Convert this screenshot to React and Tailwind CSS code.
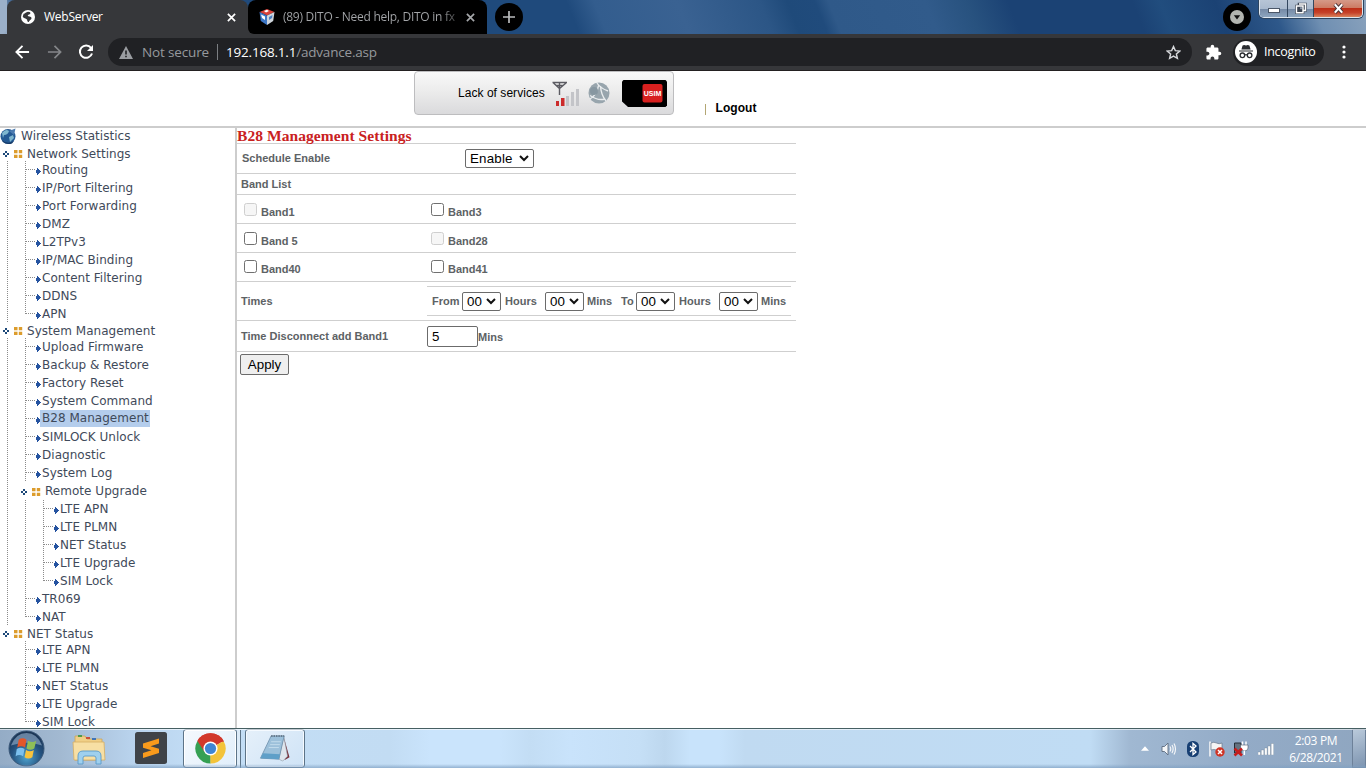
import clsx from 'clsx';

const TREE = [
  { label: 'Network Settings', children: ['Routing', 'IP/Port Filtering', 'Port Forwarding', 'DMZ', 'L2TPv3', 'IP/MAC Binding', 'Content Filtering', 'DDNS', 'APN'] },
  {
    label: 'System Management',
    children: [
      'Upload Firmware',
      'Backup & Restore',
      'Factory Reset',
      'System Command',
      'B28 Management',
      'SIMLOCK Unlock',
      'Diagnostic',
      'System Log',
      { label: 'Remote Upgrade', children: ['LTE APN', 'LTE PLMN', 'NET Status', 'LTE Upgrade', 'SIM Lock'] },
      'TR069',
      'NAT',
    ],
  },
  { label: 'NET Status', children: ['LTE APN', 'LTE PLMN', 'NET Status', 'LTE Upgrade', 'SIM Lock'] },
];

const ACTIVE = 'B28 Management';

/* ---------- browser chrome ---------- */

function CloseX({ className }) {
  return (
    <svg viewBox="0 0 10 10" className={clsx('w-[9px] h-[9px] shrink-0', className)} stroke="currentColor" strokeWidth="1.9" fill="none">
      <path d="M1 1 L9 9 M9 1 L1 9" />
    </svg>
  );
}

function TabStrip() {
  return (
    <div className="h-[34px] flex shrink-0 bg-[linear-gradient(68deg,#9db1c8_0,#8fa5c0_9px,#1f4a7c_30px,#1f4a7c_42%,#335d8e_44%,#3a6292_50%,#2c5686_56%,#1f4a7a_58%,#204b7c_60%,#2f5989_61%,#315b8b_68%,#28527f_71%,#1b4274_74%,#1b4274_83%,#214d7e_85%,#1b4274_89%,#2e588a_93%,#6f8fb2_96%,#8ba3bd_100%)]">
      <div className="w-[7px] shrink-0 bg-[#9bb0c9] rounded-br-[6px]" />
      <div className="w-[241px] shrink-0 bg-[#36373a] rounded-t-[8px] flex items-center pl-[14px] pr-[12px] text-white">
        <svg viewBox="0 0 16 16" className="w-[14px] h-[14px] shrink-0">
          <circle cx="8" cy="8" r="8" fill="#fff" />
          <path d="M3 4.4 C5 4.2 5.4 2.4 8 2 C10.500 2 11 3 10.600 4.400 C10 5.600 8 5 7.600 6.600 C8.500 8 11.500 6.800 12 9 C12.200 11 9.600 11 9 13.600 C7.600 14 7 12.400 7 11 C6 9.500 2.400 9.600 2 7.400 Z" fill="#36373a" />
        </svg>
        <span className="ml-[9px] text-[12px] leading-[16px] tracking-[-0.250px] flex-1 whitespace-nowrap">WebServer</span>
        <CloseX />
      </div>
      <div className="shrink-0 bg-[linear-gradient(transparent_12px,#36373a_20px)]">
        <div className="w-[239px] h-[34px] bg-black rounded-t-[8px] rounded-bl-[6px] flex items-center pl-[12px] pr-[12px] text-[#a5a7aa]">
          <svg viewBox="0 0 16 16" className="w-[16px] h-[16px] shrink-0 -ml-px">
            <path d="M8 0 L15.500 3 L8 6.500 L0.500 3 Z" fill="#d8413a" />
            <path d="M0.500 3 L8 6.500 V16 L1.800 12 Z" fill="#3c76c5" />
            <path d="M15.500 3 L8 6.500 V16 L14.200 12 Z" fill="#cfd5dc" />
            <path d="M5 2 L8 0.800 L10 2 L7 3.400 Z M2 5.500 L6 7.500 V11 L3 9 Z" fill="#fff" />
            <path d="M10 8 L13.500 6 L13 9 L10 11 Z" fill="#4a7fc4" />
          </svg>
          <span className="ml-[8px] text-[12px] leading-[16px] tracking-[-0.270px] whitespace-nowrap bg-[linear-gradient(90deg,#a5a7aa_0,#a5a7aa_158px,#1b1b1b_178px)] bg-clip-text text-transparent">
            (89) DITO - Need help, DITO in fx
          </span>
          <span className="flex-1" />
          <CloseX />
        </div>
      </div>
      <div className="ml-[8px] mt-[3px] w-[28px] h-[28px] rounded-full bg-black flex items-center justify-center">
        <svg viewBox="0 0 12 12" className="w-[12px] h-[12px]" stroke="#b9bbbd" strokeWidth="1.7">
          <path d="M6 0 V12 M0 6 H12" />
        </svg>
      </div>
      <div className="flex-1" />
      <div className="mt-[3px] w-[28px] h-[28px] rounded-full bg-black flex items-center justify-center">
        <svg viewBox="0 0 14 14" className="w-[14px] h-[14px]">
          <circle cx="7" cy="7" r="7" fill="#b3b5b0" />
          <path d="M3.800 5.200 H10.200 L7 9.600 Z" fill="#111" />
        </svg>
      </div>
      <div className="ml-[8px] mr-[3px] w-[104px] h-[18px] flex border border-t-0 border-[#dfe7ef] rounded-b-[5px] overflow-hidden shadow-[0_0_0_1px_#2d4560]">
        <div className="w-[28px] border-r border-[#33475f] bg-[linear-gradient(#b7c5d6_0,#aabace_50%,#7488a4_51%,#8da5bf_100%)] flex justify-center items-center">
          <div className="w-[12px] h-[5px] mt-[3px] bg-white border border-[#4b5768]" />
        </div>
        <div className="w-[26px] border-r border-[#33475f] bg-[linear-gradient(#b7c5d6_0,#aabace_50%,#7488a4_51%,#8da5bf_100%)] flex justify-center items-center">
          <svg viewBox="0 0 12 12" className="w-[12px] h-[12px] -mt-px" fill="none">
            <path d="M4 2 H10.500 V8.500 H4 Z M1.500 4 H8 V10.800 H1.500 Z" stroke="#3d4654" strokeWidth="2.600" />
            <path d="M4 2 H10.500 V8.500 H8.500 M1.500 4 H8 V10.800 H1.500 Z" stroke="#fff" strokeWidth="1.400" />
          </svg>
        </div>
        <div className="flex-1 bg-[linear-gradient(#d59a88_0,#cc7a62_48%,#bd2f17_50%,#c6422a_75%,#d9835c_100%)] flex justify-center items-center">
          <svg viewBox="0 0 14 12" className="w-[13px] h-[11px] -mt-px">
            <path d="M3 1.500 L11 10.500 M11 1.500 L3 10.500" stroke="#4b3538" strokeWidth="4.200" />
            <path d="M3 1.500 L11 10.500 M11 1.500 L3 10.500" stroke="#fff" strokeWidth="2.400" />
          </svg>
        </div>
      </div>
    </div>
  );
}

function Toolbar() {
  return (
    <div className="h-[37px] shrink-0 bg-[#36373a] border-b border-[#232021] flex items-center pl-[15px] text-white">
      <svg viewBox="0 0 16 16" className="w-[15px] h-[16px]" fill="none" stroke="#fff" strokeWidth="2">
        <path d="M15 8 H2 M8 1.500 L1.500 8 L8 14.500" />
      </svg>
      <svg viewBox="0 0 16 16" className="ml-[17px] w-[15px] h-[16px]" fill="none" stroke="#85878a" strokeWidth="1.800">
        <path d="M1 8 H14 M8 1.500 L14.500 8 L8 14.500" />
      </svg>
      <svg viewBox="0 0 16 16" className="ml-[16px] w-[16px] h-[16px]">
        <path d="M13 3.800 A6.200 6.200 0 1 0 14 9.500" fill="none" stroke="#fff" strokeWidth="2" />
        <path d="M15 1 V7 H9 Z" fill="#fff" />
      </svg>
      <div className="ml-[14px] w-[1084px] h-[28px] rounded-full bg-[#202124] flex items-center pl-[11px] pr-[11px] text-[14px]">
        <svg viewBox="0 0 14 13" className="w-[14px] h-[13px]">
          <path d="M7 0 L14 13 H0 Z" fill="#9a9da1" />
          <path d="M6.200 4.500 H7.800 V8.600 H6.200 Z M6.200 9.700 H7.800 V11.300 H6.200 Z" fill="#202124" />
        </svg>
        <span className="ml-[9px] w-[75px] text-[#96999d] text-[13.500px] tracking-[-0.14px] whitespace-nowrap">Not secure</span>
        <span className="w-px h-[16px] bg-[#7b7e82]" />
        <span className="ml-[8px] flex-1 text-[13.500px] tracking-[-0.2px] whitespace-nowrap text-[#96999d]">
          <span className="text-white">192.168.1.1</span>/advance.asp
        </span>
        <svg viewBox="0 0 24 24" className="w-[15px] h-[15px]" fill="none" stroke="#d7d9dc" strokeWidth="2.300">
          <path d="M12 2.500 L14.900 9 L22 9.700 L16.600 14.400 L18.200 21.400 L12 17.700 L5.800 21.400 L7.400 14.400 L2 9.700 L9.100 9 Z" />
        </svg>
      </div>
      <svg viewBox="0 0 24 24" className="ml-[13px] w-[17px] h-[17px]" fill="#fff">
        <path d="M20.500 11H19V7c0-1.100-.9-2-2-2h-4V3.500a2.500 2.500 0 0 0-5 0V5H4c-1.100 0-1.990.9-1.990 2v3.800H3.500c1.490 0 2.700 1.210 2.700 2.700s-1.210 2.700-2.700 2.700H2V20c0 1.100.9 2 2 2h3.800v-1.500c0-1.490 1.210-2.700 2.700-2.700s2.700 1.210 2.700 2.700V22H17c1.100 0 2-.9 2-2v-4h1.500a2.500 2.500 0 0 0 0-5z" />
      </svg>
      <div className="ml-[11px] w-[91px] h-[27px] rounded-full bg-[#202124] flex items-center pl-[2px]">
        <svg viewBox="0 0 22 22" className="w-[22px] h-[22px] shrink-0">
          <circle cx="11" cy="11" r="11" fill="#fff" />
          <path d="M7.600 4.500 L9.200 4 L11 4.500 L12.800 4 L14.400 4.500 L15.600 8.600 H6.400 Z M4 9.500 H18 V10.600 H4 Z" fill="#2b2d31" />
          <g fill="none" stroke="#2b2d31" strokeWidth="1.300">
            <circle cx="7.400" cy="14.300" r="2.300" />
            <circle cx="14.600" cy="14.300" r="2.300" />
            <path d="M9.700 14 Q11 13.200 12.300 14" />
          </g>
        </svg>
        <span className="ml-[7px] text-[12.500px] tracking-[-0.3px] whitespace-nowrap">Incognito</span>
      </div>
      <svg viewBox="0 0 4 14" className="ml-[18px] w-[4px] h-[14px]" fill="#fff">
        <circle cx="2" cy="2" r="1.600" />
        <circle cx="2" cy="7" r="1.600" />
        <circle cx="2" cy="12" r="1.600" />
      </svg>
    </div>
  );
}

/* ---------- router page ---------- */

function StatusHeader() {
  return (
    <div className="h-[57px] shrink-0 border-b-2 border-[#cdcdcd] flex items-start pl-[414px] font-['Liberation_Sans',sans-serif] text-black">
      <div className="w-[260px] h-[44px] border border-[#bdbdbf] rounded-[4px] bg-[linear-gradient(#f8f8f8_0,#ececec_45%,#dadadc_100%)] flex items-start">
        <span className="ml-[43px] mt-[13px] w-[88px] text-[12px] leading-[16px] tracking-[0.04px] whitespace-nowrap">Lack of services</span>
        <svg viewBox="0 0 28 26" className="ml-[6px] mt-[9px] w-[28px] h-[26px]">
          <path d="M0.500 1.500 H15 M1.500 2 L7.500 7.500 L14 2 M4 4.500 H11.500 M7.500 1 V14" stroke="#5b5b62" strokeWidth="1.400" fill="none" />
          <path d="M4 20 H7 V25 H4 Z M9 17 H12.500 V25 H9 Z" fill="#cc2b2b" />
          <path d="M14 15 H17 V25 H14 Z M19 11 H22 V25 H19 Z M24 8 H27 V25 H24 Z" fill="#c3c4c8" />
        </svg>
        <svg viewBox="0 0 22 22" className="ml-[8px] mt-[10px] w-[22px] h-[22px]">
          <circle cx="11" cy="11" r="10.500" fill="#98a5ad" />
          <path d="M9 1 Q12 6 20 9 M12.500 4 Q13 13 18 19 M10.500 3.500 Q9 13 2 17 M2 13.500 Q10 19 17 17" fill="none" stroke="#e9ecee" strokeWidth="1.400" />
          <circle cx="6" cy="9" r="4" fill="#8797a1" />
        </svg>
        <svg viewBox="0 0 45 27" className="ml-[12px] mt-[8px] w-[45px] h-[27px]">
          <path d="M1.500 0 H43.500 L45 1.500 V25.500 L43.500 27 H6 L0 21.500 V1.500 Z" fill="#000" />
          <rect x="20.500" y="4" width="20" height="18.500" rx="2" fill="#d8201f" />
          <text x="30.500" y="16.300" textAnchor="middle" fontSize="7" fontWeight="700" fill="#fff" fontFamily="Liberation Sans">USIM</text>
        </svg>
      </div>
      <div className="ml-[31px] mt-[28px] flex items-center text-[12px] leading-[18px]">
        <span className="w-px h-[11px] mt-[2px] bg-[#b3a673]" />
        <span className="ml-[9.500px] font-bold tracking-[0.05px]">Logout</span>
      </div>
    </div>
  );
}

function VLine() {
  return (
    <svg viewBox="0 0 18 18" className="w-[18px] h-[18px] shrink-0">
      <path d="M7.500 0 V18" stroke="#8b8b8b" strokeDasharray="1 1" />
    </svg>
  );
}

function Elbow({ last }) {
  return (
    <svg viewBox="0 0 24 18" className="w-[24px] h-[18px] shrink-0">
      <path d={last ? 'M7.500 0 V9' : 'M7.500 0 V18'} stroke="#8b8b8b" strokeDasharray="1 1" />
      <path d="M8 8.500 H18" stroke="#8b8b8b" strokeDasharray="1 1" />
      <path d="M18 9 H19 V12 H18 Z M19 7 H20 V14 H19 Z M20 8 H21 V13 H20 Z M21 9 H22 V12 H21 Z M22 10 H23 V11 H22 Z" fill="#2553a0" />
    </svg>
  );
}

function FolderIcon() {
  return (
    <svg viewBox="0 0 27 15" className="w-[27px] h-[15px] shrink-0">
      <path d="M5 5 H7 V7 H5 Z M3 7 H5 V9 H3 Z M7 7 H9 V9 H7 Z M5 9 H7 V11 H5 Z" fill="#1e4a7a" />
      <path d="M14 4 H17.500 V7.300 H14 Z M18.800 4 H22.200 V7.300 H18.800 Z M14 8.700 H17.500 V12 H14 Z M18.800 8.700 H22.200 V12 H18.800 Z" fill="#dc9c2c" />
    </svg>
  );
}

function Leaf({ label, guides, last }) {
  return (
    <div className="h-[18px] flex items-center">
      {guides.map((on, i) => (on ? <VLine key={i} /> : <span key={i} className="w-[18px] shrink-0" />))}
      <Elbow last={last} />
      <span className={clsx('leading-[17px]', label === ACTIVE && 'bg-[#b4cdec] -ml-[2px] -mt-px pl-[2px] pr-px')}>{label}</span>
    </div>
  );
}

function Branch({ node, guides, last }) {
  const inner = [...guides, !last];
  return (
    <div>
      <div className={clsx('flex items-center', guides.length ? 'h-[18px]' : 'h-[15px]')}>
        {guides.map((on, i) => (on ? <VLine key={i} /> : <span key={i} className="w-[18px] shrink-0" />))}
        <FolderIcon />
        <span className={clsx(!guides.length && 'pt-[2px]')}>{node.label}</span>
      </div>
      {node.children.map((child, i) => {
        const isLast = i === node.children.length - 1;
        return typeof child === 'string' ? (
          <Leaf key={child} label={child} guides={inner} last={isLast} />
        ) : (
          <Branch key={child.label} node={child} guides={inner} last={isLast} />
        );
      })}
    </div>
  );
}

function Sidebar() {
  return (
    <nav className="w-[237px] shrink-0 border-r-2 border-[#cdcdcd] overflow-hidden font-['DejaVu_Sans',sans-serif] text-[12px] tracking-[0.03px] leading-[15px] text-[#3f4a5a] whitespace-nowrap">
      <div className="h-[18px] flex items-center pb-[2px]">
        <svg viewBox="0 0 16 16" className="w-[16px] h-[16px] shrink-0">
          <circle cx="8" cy="8.500" r="7.500" fill="#245a94" />
          <path d="M2 5 Q6 0 9 3 Q8 7 4 7 L3 10 Z M9 9 L13 7 L14 10 L10 14 Z" fill="#7fb7cf" />
          <path d="M9 3 L15.500 0.500 L14 7 Z" fill="#4b7bb0" />
          <path d="M2 12 Q7 17 14 13 L12 15.500 Q7 17 3 14 Z" fill="#173a66" />
        </svg>
        <span className="ml-[5px]">Wireless Statistics</span>
      </div>
      {TREE.map((node, i) => (
        <Branch key={node.label} node={node} guides={[]} last={i === TREE.length - 1} />
      ))}
    </nav>
  );
}

function SelectBox({ value, className }) {
  return (
    <div className={clsx('h-[19px] shrink-0 border border-[#6b6b6b] rounded-[2px] bg-white flex items-center justify-between pl-[4px] pr-[4px] font-normal text-[13.333px] text-black', className)}>
      <span className="leading-[17px] tracking-[0.2px]">{value}</span>
      <svg viewBox="0 0 10 7" className="w-[10px] h-[7px]" fill="none" stroke="#111" strokeWidth="2">
        <path d="M1 1 L5 5 L9 1" />
      </svg>
    </div>
  );
}

function Band({ label, disabled, className }) {
  return (
    <div className={clsx('flex items-start pl-[7px]', className)}>
      <span className={clsx('w-[13px] h-[13px] border rounded-[2.500px]', disabled ? 'border-[#cfcfcf] bg-[#f6f6f6]' : 'border-[#707070] bg-white')} />
      <span className="ml-[4px] mt-[3px] leading-[13px]">{label}</span>
    </div>
  );
}

const BAND_ROWS = [
  { pad: 'pt-[8px]', bands: [['Band1', true], ['Band3', false]] },
  { pad: 'pt-[8px]', bands: [['Band 5', false], ['Band28', true]] },
  { pad: 'pt-[7px]', bands: [['Band40', false], ['Band41', false]] },
];

function Settings() {
  return (
    <main className="w-[559px] font-['Liberation_Sans',sans-serif] font-bold text-[11px] text-[#5d6265] whitespace-nowrap">
      <h1 className="h-[16px] border-b border-[#cfcfcf] font-['Liberation_Serif',serif] font-bold text-[15.500px] leading-[15px] tracking-[0.070px] text-[#c9211e]">
        B28 Management Settings
      </h1>
      <div className="h-[30px] border-b border-[#cfcfcf] flex items-center pl-[5px]">
        <span className="w-[223px]">Schedule Enable</span>
        <SelectBox value="Enable" className="w-[69px]" />
      </div>
      <div className="h-[21px] border-b border-[#cfcfcf] flex items-center pl-[4px]">Band List</div>
      {BAND_ROWS.map(({ pad, bands }) => (
        <div key={bands[0][0]} className="h-[29px] border-b border-[#cfcfcf] flex">
          {bands.map(([label, disabled]) => (
            <Band key={label} label={label} disabled={disabled} className={clsx('w-[187px]', pad)} />
          ))}
        </div>
      ))}
      <div className="h-[39px] border-b border-[#cfcfcf] flex items-center pl-[4px]">
        <span className="w-[186px]">Times</span>
        <div className="w-[364px] h-[30px] border-y border-[#cfcfcf] flex items-center pl-[5px]">
          <span className="w-[30px] pt-px">From</span>
          <SelectBox value="00" className="w-[39px]" />
          <span className="pl-[4px] w-[44px] pt-px">Hours</span>
          <SelectBox value="00" className="w-[39px]" />
          <span className="pl-[3px] w-[37px] pt-px">Mins</span>
          <span className="w-[15px] pt-px">To</span>
          <SelectBox value="00" className="w-[39px]" />
          <span className="pl-[4px] w-[44px] pt-px">Hours</span>
          <SelectBox value="00" className="w-[39px]" />
          <span className="pl-[3px] pt-px">Mins</span>
        </div>
      </div>
      <div className="h-[31px] border-b border-[#cfcfcf] flex items-center pl-[4px]">
        <span className="w-[186px]">Time Disconnect add Band1</span>
        <div className="w-[51px] h-[21px] border border-[#6b6b6b] rounded-[2px] pl-[4px] font-normal text-[13.333px] leading-[19px] text-black">5</div>
        <span className="pt-[2px]">Mins</span>
      </div>
      <button className="ml-[3px] mt-[2px] w-[49px] h-[21px] border border-[#6b6b6b] rounded-[2px] bg-[#efefef] font-normal text-[13.333px] leading-[19px] text-black">
        Apply
      </button>
    </main>
  );
}

/* ---------- windows taskbar ---------- */

function StartOrb() {
  return (
    <svg viewBox="0 0 38 38" className="w-[37px] h-[37px]">
      <defs>
        <radialGradient id="orb" cx="50%" cy="75%" r="70%">
          <stop offset="0" stopColor="#4fa3cf" />
          <stop offset="0.600" stopColor="#24527f" />
          <stop offset="1" stopColor="#1b3555" />
        </radialGradient>
      </defs>
      <circle cx="19" cy="19" r="18" fill="url(#orb)" stroke="#3c5878" />
      <path d="M3 16 Q8 3 19 3 Q30 3 35 16 Q19 10 3 16 Z" fill="#8fa9c4" opacity="0.650" />
      <path d="M11 10 Q15 7 19 10 L17.500 18 Q13.500 15.500 9.500 18 Z" fill="#e2572b" />
      <path d="M20.500 11 Q25 13.500 29 11 L27 19 Q23 21.500 19 19 Z" fill="#8fbf58" />
      <path d="M9 19.500 Q13 17 17 19.500 L15.500 27 Q11.500 24.500 7.800 27 Z" fill="#7cc0ee" />
      <path d="M18.500 20.500 Q22.500 23 26.500 20.500 L25 28 Q21 30.500 17 28 Z" fill="#f8c33c" />
    </svg>
  );
}

function Taskbar() {
  return (
    <footer className="h-[40px] shrink-0 border-t border-[#465f62] flex items-center relative text-white bg-[linear-gradient(90deg,#94acc6_0,#a2b9d1_60px,#b8d2ec_130px,#c3def6_200px,#c2dcf3_390px,#cae4fc_430px,#cae4fc_500px,#c3ddf4_530px,#c9e3fb_570px,#c5dff6_640px,#bdd7ee_665px,#c8e3fb_690px,#c8e3fb_720px,#c0daf1_745px,#c0dcf4_1090px,#a0b8d2_1130px,#93abc7_1240px,#8fa6c0_1366px)]">
      <div className="absolute inset-x-0 top-0 h-px bg-white/60" />
      <div className="absolute inset-x-0 bottom-0 h-[4px] bg-[linear-gradient(#7fa0c200,#7fa0c2bb)]" />
      <div className="ml-[8px]">
        <StartOrb />
      </div>
      <svg viewBox="0 0 34 32" className="ml-[27px] w-[34px] h-[32px] shrink-0">
        <path d="M3 3 H13 L15 6 H30 V27 H3 Z" fill="#f0cf86" stroke="#c9a35a" strokeWidth="0.800" />
        <path d="M6 2 H10 V4 H6 Z" fill="#4f9a4a" />
        <path d="M14 4 H18 V6 H14 Z" fill="#c9503a" />
        <path d="M20 5 H24 V7 H20 Z" fill="#3f74b8" />
        <path d="M1 9 H32 L33 27 H2 Z" fill="#f7dfa4" stroke="#d5ad62" strokeWidth="0.800" />
        <path d="M6 31 V23 Q6 18 11 18 H24 Q29 18 29 23 V31 H24 V25 Q24 23 22 23 H13 Q11 23 11 25 V31 Z" fill="#9fd0ee" stroke="#5a9ac8" strokeWidth="0.900" />
      </svg>
      <svg viewBox="0 0 32 32" className="ml-[29px] w-[32px] h-[32px] shrink-0 -mt-px">
        <rect width="32" height="32" rx="2.500" fill="#3f4348" />
        <path d="M8 11.600 L24 6.500 V11.500 L15.500 14.200 L24 16.800 V21 L8 26 V21 L16.500 18.300 L8 15.800 Z" fill="#f89a1c" />
      </svg>
      <div className="ml-[16px] w-[54px] h-[39px] shrink-0 border border-[#5d7488] rounded-[3px] bg-[linear-gradient(135deg,#f5f9fd,#e0eefb)] flex items-center justify-center shadow-[inset_0_0_0_1px_#fff]">
        <svg viewBox="0 0 32 32" className="w-[31px] h-[31px] -mt-px">
          <path d="M16 16 L2.500 8.200 A15.500 15.500 0 0 1 29.500 8.200 Z" fill="#d2382b" />
          <path d="M16 16 L29.500 8.200 A15.500 15.500 0 0 1 16 31.500 Z" fill="#f3c33a" />
          <path d="M16 16 L16 31.500 A15.500 15.500 0 0 1 2.500 8.200 Z" fill="#35a053" />
          <path d="M16 9 H29.900 L29.500 8.200 A15.500 15.500 0 0 0 2.500 8.200 L9.900 19.500 Z" fill="#d2382b" />
          <path d="M22.100 19.500 L16 31.500 L16 23 Z" fill="#f3c33a" />
          <circle cx="16" cy="16" r="7.300" fill="#fff" />
          <circle cx="16" cy="16" r="5.800" fill="#3f86d4" />
        </svg>
      </div>
      <div className="w-[4px] h-[38px] shrink-0 border-r border-[#5d7488] bg-[#dcebf8]" />
      <div className="ml-[4px] w-[60px] h-[39px] shrink-0 border border-[#5d7488] rounded-[3px] bg-[linear-gradient(135deg,#e5f0fa,#cfe3f6)] flex items-center justify-center shadow-[inset_0_0_0_1px_#f5faff]">
        <svg viewBox="0 0 32 30" className="w-[32px] h-[29px] -mt-px">
          <path d="M25 3 L31 24 L26 27 Z" fill="#7a2f38" />
          <path d="M25 2 L29 23 L24 28 L20 26 Z" fill="#dfe5ec" stroke="#8b98a5" strokeWidth="0.600" />
          <path d="M12 2 H25.500 L20 26 L1 25 Z" fill="#9cc0da" stroke="#6a8ba8" strokeWidth="0.800" />
          <path d="M3.500 20 L21.200 21 L20 26 L1 25 Z" fill="#5f9fc8" />
          <path d="M12 2 H25.500" stroke="#5a6b7a" strokeWidth="1.600" strokeDasharray="1.500 1" />
          <path d="M12 8 H22 M11 11 H21 M9.500 14 H20" stroke="#c3dcec" strokeWidth="1" />
        </svg>
      </div>
      <div className="flex-1" />
      <svg viewBox="0 0 8 5" className="w-[8px] h-[5px]">
        <path d="M4 0.300 L8 4.700 H0 Z" fill="#fff" />
      </svg>
      <svg viewBox="0 0 16 14" className="ml-[12px] w-[16px] h-[14px]">
        <path d="M1 4.500 H3.500 L7 1 V13 L3.500 9.500 H1 Z" fill="#f4f6f8" stroke="#5c6c80" strokeWidth="0.900" />
        <path d="M9 4.500 Q10.500 7 9 9.500 M11 3 Q13.300 7 11 11 M13 1.500 Q16 7 13 12.500" fill="none" stroke="#f4f6f8" strokeWidth="1.200" />
      </svg>
      <svg viewBox="0 0 12 16" className="ml-[10px] w-[12px] h-[16px]">
        <rect width="12" height="16" rx="5.500" fill="#173f73" />
        <path d="M3 5 L9 11 L6 13.500 V2.500 L9 5 L3 11" fill="none" stroke="#fff" strokeWidth="1.300" />
      </svg>
      <svg viewBox="0 0 16 16" className="ml-[10px] w-[16px] h-[16px]">
        <path d="M1 0.500 V15.500" stroke="#f5f5f5" strokeWidth="1.600" />
        <path d="M2 2 Q5 0.500 7.500 2 T13 2 V9 Q10 10 7.500 9 T2 9 Z" fill="#f5f5f5" stroke="#66758a" strokeWidth="0.700" />
        <circle cx="11" cy="11" r="4.700" fill="#cf3527" />
        <path d="M9 9 L13 13 M13 9 L9 13" stroke="#fff" strokeWidth="1.500" />
      </svg>
      <svg viewBox="0 0 16 16" className="ml-[8px] w-[16px] h-[16px]">
        <path d="M1.500 2 H8 V12 H1.500 Z" fill="#65717f" stroke="#252e38" />
        <path d="M9.500 0.500 V4 M13 0.500 V4" stroke="#fff" strokeWidth="1.500" />
        <path d="M7.500 4 H15 V7 Q15 10 11.300 10 Q7.500 10 7.500 7 Z" fill="#fff" stroke="#4a5868" strokeWidth="0.600" />
        <path d="M11.300 10 V14" stroke="#fff" strokeWidth="1.500" />
        <path d="M1.500 7.500 L9 14.500 M9 7.500 L1.500 14.500" stroke="#c51d1d" strokeWidth="2.600" />
      </svg>
      <svg viewBox="0 0 16 12" className="ml-[9px] mr-px w-[16px] h-[12px]">
        <path d="M0 9 H2.500 V12 H0 Z M3.300 7 H5.800 V12 H3.300 Z M6.600 5 H9.100 V12 H6.600 Z M9.900 3 H12.400 V12 H9.900 Z M13.200 0.500 H15.700 V12 H13.200 Z" fill="#fff" stroke="#5c6c80" strokeWidth="0.300" />
      </svg>
      <div className="ml-[12px] w-[58px] text-center text-[12px] leading-[17px] tracking-[-0.350px] whitespace-nowrap">
        <div>2:03 PM</div>
        <div>6/28/2021</div>
      </div>
      <div className="ml-[7px] w-[14px] h-[39px] border border-[#6d8199] bg-[linear-gradient(160deg,#b9c9da,#7d94b0)]" />
    </footer>
  );
}

export default function App() {
  return (
    <div className="w-[1366px] h-[768px] overflow-hidden flex flex-col bg-white font-['Open_Sans','Noto_Sans',sans-serif]">
      <TabStrip />
      <Toolbar />
      <StatusHeader />
      <div className="flex-1 min-h-0 flex -mt-px pt-px">
        <Sidebar />
        <Settings />
      </div>
      <Taskbar />
    </div>
  );
}
